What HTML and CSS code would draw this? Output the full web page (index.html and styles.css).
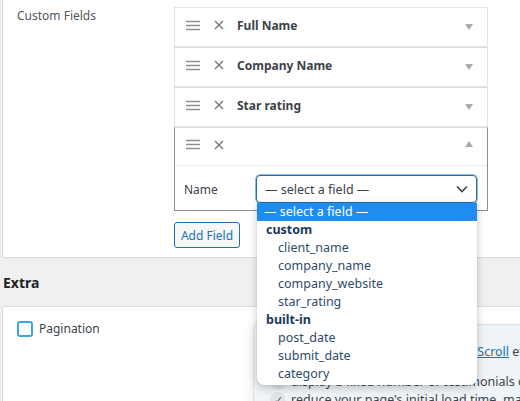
FILE: index.html
```html
<!DOCTYPE html>
<html>
<head>
<meta charset="utf-8">
<link rel="stylesheet" href="styles.css">
</head>
<body>
<div class="page">
  <section class="panel panel-top">
    <div class="form-row">
      <div class="row-label">Custom Fields</div>
      <div class="row-field">
        <ul class="field-list">
          <li class="field">
            <div class="field-head">
              <svg class="ic-drag" width="14" height="11" viewBox="0 0 14 11"><path d="M0 1.5h14M0 5.5h14M0 9.5h14" stroke="#8c8f94" stroke-width="1.6"/></svg>
              <svg class="ic-x" width="10" height="10" viewBox="0 0 10 10"><path d="M1 1l8 8M9 1l-8 8" stroke="#787c82" stroke-width="1.5"/></svg>
              <span class="field-title">Full Name</span>
              <span class="caret down"></span>
            </div>
          </li>
          <li class="field">
            <div class="field-head">
              <svg class="ic-drag" width="14" height="11" viewBox="0 0 14 11"><path d="M0 1.5h14M0 5.5h14M0 9.5h14" stroke="#8c8f94" stroke-width="1.6"/></svg>
              <svg class="ic-x" width="10" height="10" viewBox="0 0 10 10"><path d="M1 1l8 8M9 1l-8 8" stroke="#787c82" stroke-width="1.5"/></svg>
              <span class="field-title">Company Name</span>
              <span class="caret down"></span>
            </div>
          </li>
          <li class="field">
            <div class="field-head">
              <svg class="ic-drag" width="14" height="11" viewBox="0 0 14 11"><path d="M0 1.5h14M0 5.5h14M0 9.5h14" stroke="#8c8f94" stroke-width="1.6"/></svg>
              <svg class="ic-x" width="10" height="10" viewBox="0 0 10 10"><path d="M1 1l8 8M9 1l-8 8" stroke="#787c82" stroke-width="1.5"/></svg>
              <span class="field-title">Star rating</span>
              <span class="caret down"></span>
            </div>
          </li>
          <li class="field field-open">
            <div class="field-head">
              <svg class="ic-drag" width="14" height="11" viewBox="0 0 14 11"><path d="M0 1.5h14M0 5.5h14M0 9.5h14" stroke="#8c8f94" stroke-width="1.6"/></svg>
              <svg class="ic-x" width="10" height="10" viewBox="0 0 10 10"><path d="M1 1l8 8M9 1l-8 8" stroke="#787c82" stroke-width="1.5"/></svg>
              <span class="field-title"></span>
              <span class="caret up"></span>
            </div>
            <div class="field-body">
              <span class="name-label">Name</span>
              <div class="select-wrap">
                <div class="select">
                  <span>— select a field —</span>
                  <svg width="12" height="8" viewBox="0 0 12 8"><path d="M1 1.5l5 5 5-5" fill="none" stroke="#3c434a" stroke-width="1.6"/></svg>
                </div>
                <ul class="dropdown">
                  <li class="opt selected">— select a field —</li>
                  <li class="group">custom</li>
                  <li class="opt">client_name</li>
                  <li class="opt">company_name</li>
                  <li class="opt">company_website</li>
                  <li class="opt">star_rating</li>
                  <li class="group">built-in</li>
                  <li class="opt">post_date</li>
                  <li class="opt">submit_date</li>
                  <li class="opt">category</li>
                </ul>
              </div>
            </div>
          </li>
        </ul>
        <button class="btn">Add Field</button>
      </div>
    </div>
  </section>

  <h2 class="section-title">Extra</h2>

  <section class="panel panel-bottom">
    <div class="form-row bottom-row">
      <div class="check-col">
        <label class="check"><span class="box"></span>Pagination</label>
      </div>
      <div class="upsell">
        <p class="up-line up-title">Add a Load More button or Infinite <a href="#">Scroll</a> effect</p>
        <p class="up-line"><span class="bullet circle"></span>display a fixed number of testimonials on each page</p>
        <p class="up-line"><span class="bullet tick">✓</span>reduce your page's initial load time, making it faster</p>
      </div>
    </div>
  </section>
</div>
</body>
</html>
```

FILE: styles.css
```css
* { box-sizing: border-box; }
html, body { margin: 0; padding: 0; }
body {
  background: #f0f0f1;
  font-family: "Noto Sans", "Open Sans", sans-serif;
  font-size: 12px;
  color: #3c434a;
  width: 520px;
  height: 401px;
  overflow: hidden;
}
.page { padding-left: 2px; }
.panel {
  background: #fff;
  border-left: 1px solid #dcdcde;
}
.panel-top {
  border-bottom: 1px solid #dcdcde;
  padding: 7px 0 9px;
}
.form-row { display: flex; }
.row-label {
  width: 171px;
  padding: 0 0 0 14px;
  line-height: 18px;
  color: #50575e;
}
.row-field { width: 314px; }
.field-list { list-style: none; margin: 0; padding: 0; }
.field {
  border: 1px solid #e2e4e7;
  background: #fff;
}
.field + .field { border-top: 1px solid #dcdcde; }
.field-head {
  height: 38px;
  display: flex;
  align-items: center;
  padding: 0 14px 4px 11px;
}
.ic-drag { margin-right: 14px; }
.ic-x { margin-right: 13px; }
.field-title {
  flex: 1;
  font-weight: 700;
  color: #3c434a;
}
.caret {
  width: 0; height: 0;
  border-left: 4px solid transparent;
  border-right: 4px solid transparent;
}
.caret.down { border-top: 6px solid #a7aaad; margin-top: 3px; }
.caret.up { border-bottom: 6px solid #a7aaad; margin-top: -1px; }
.field-open {
  border: 1px solid #8c8f94;
  position: relative;
}
.field-open .field-head { border-bottom: 1px dotted #dcdcde; }
.field-body {
  display: flex;
  align-items: center;
  padding: 9px 10px 7px 9px;
}
.name-label { width: 72px; }
.select-wrap { position: relative; flex: 1; }
.select {
  height: 28px;
  border: 1px solid #2271b1;
  border-radius: 4px;
  box-shadow: 0 0 0 0.5px #2271b1;
  display: flex;
  align-items: center;
  justify-content: space-between;
  padding: 0 8px 0 8px;
  color: #3c434a;
  font-size: 12.5px;
}
.dropdown {
  position: absolute;
  z-index: 10;
  left: 1px;
  top: 28px;
  width: 220px;
  margin: 0;
  padding: 0 0 2px;
  list-style: none;
  background: #fff;
  border-radius: 0 0 7px 7px;
  box-shadow: 0 3px 8px rgba(0,0,0,0.22), 0 0 1px rgba(0,0,0,0.2);
  line-height: 18px;
  font-size: 12.5px;
}
.dropdown li { height: 18px; white-space: nowrap; }
.dropdown .opt { padding-left: 21px; color: #2f4b6a; }
.dropdown .opt.selected {
  padding-left: 7px;
  background: #1f8cf0;
  color: #fff;
}
.dropdown .group {
  padding-left: 9px;
  font-weight: 700;
  color: #1b3a5c;
}
.btn {
  margin-top: 11px;
  height: 26px;
  width: 66px;
  padding: 0;
  font: inherit;
  color: #2271b1;
  background: #f6f7f7;
  border: 1px solid #2271b1;
  border-radius: 3px;
}
.section-title {
  margin: 0;
  height: 48px;
  padding: 15px 0 0 1px;
  font-size: 14px;
  line-height: 20px;
  font-weight: 700;
  color: #1d2327;
}
.panel-bottom {
  border-top: 1px solid #dcdcde;
  height: 200px;
}
.bottom-row { align-items: flex-start; }
.check-col { width: 250px; padding: 13px 0 0 14px; }
.check {
  display: flex;
  align-items: center;
  gap: 6px;
  line-height: 18px;
}
.box {
  width: 16px; height: 16px;
  border: 2px solid #3ba7e3;
  border-radius: 3px;
}
.upsell {
  flex: 1;
  margin-top: 17px;
  background: #eef4f8;
  border: 1px solid #dcdfe3;
  border-right: 0;
  border-radius: 5px 0 0 0;
  box-shadow: -4px 0 10px rgba(0,0,0,0.05);
  padding: 18px 0 0 16px;
  height: 120px;
  white-space: nowrap;
  overflow: hidden;
  font-size: 12.5px;
}
.up-line {
  margin: 0;
  line-height: 18px;
  color: #3c434a;
  display: flex;
  align-items: center;
}
.up-title { margin-bottom: 12px; display: block; }
.up-title a { color: #2271b1; }
.bullet {
  width: 16px; height: 16px;
  border-radius: 50%;
  background: #e1e4e8;
  margin-right: 5px;
  flex: none;
  font-size: 11px;
  line-height: 16px;
  text-align: center;
  color: #50575e;
}
```
